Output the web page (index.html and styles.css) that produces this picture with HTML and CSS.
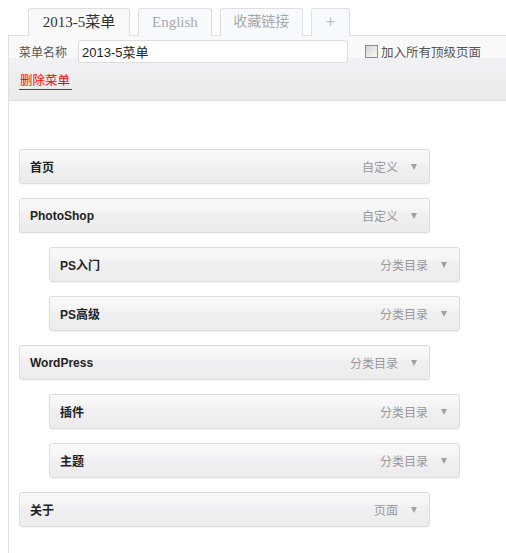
FILE: index.html
```html
<!DOCTYPE html>
<html lang="zh-CN">
<head>
<meta charset="utf-8">
<title>菜单</title>
<link rel="stylesheet" href="styles.css">
</head>
<body>
<div class="tabs">
  <div class="tab active">2013-5菜单</div>
  <div class="tab">English</div>
  <div class="tab cn">收藏链接</div>
  <div class="tab plus">+</div>
</div>
<div class="panel">
  <div class="header">
    <div class="name-row">
      <label class="name-label">菜单名称</label>
      <input class="name-input" type="text" value="2013-5菜单">
      <label class="auto"><span class="cb"></span>加入所有顶级页面</label>
    </div>
    <div class="del-row"><a class="del">删除菜单</a></div>
  </div>
  <ul class="menu">
    <li class="item"><span class="title">首页</span><span class="type">自定义</span><span class="arrow"></span></li>
    <li class="item"><span class="title">PhotoShop</span><span class="type">自定义</span><span class="arrow"></span></li>
    <li class="item sub"><span class="title">PS入门</span><span class="type">分类目录</span><span class="arrow"></span></li>
    <li class="item sub"><span class="title">PS高级</span><span class="type">分类目录</span><span class="arrow"></span></li>
    <li class="item"><span class="title">WordPress</span><span class="type">分类目录</span><span class="arrow"></span></li>
    <li class="item sub"><span class="title">插件</span><span class="type">分类目录</span><span class="arrow"></span></li>
    <li class="item sub"><span class="title">主题</span><span class="type">分类目录</span><span class="arrow"></span></li>
    <li class="item"><span class="title">关于</span><span class="type">页面</span><span class="arrow"></span></li>
  </ul>
</div>
</body>
</html>
```
FILE: styles.css
```css
html, body {
  margin: 0;
  padding: 0;
  background: #fff;
}
body {
  padding: 8px 0 0 8px;
  font-family: "Liberation Sans", "Noto Sans CJK SC", sans-serif;
  font-size: 12px;
  color: #333;
  overflow: hidden;
}
.tabs {
  display: flex;
  gap: 8px;
  margin-left: 20px;
  position: relative;
  z-index: 1;
  margin-bottom: -1px;
}
.tab {
  box-sizing: border-box;
  height: 28px;
  border: 1px solid #dfdfdf;
  border-bottom: none;
  border-radius: 3px 3px 0 0;
  background: #f8fbfe;
  font-family: "Liberation Serif", "Noto Sans CJK SC", serif;
  font-size: 15px;
  line-height: 26px;
  color: #a9a9a9;
  text-align: center;
  padding: 0 13px;
}
.tab.active {
  background: #f9f9f9;
  color: #333;
  width: 102px;
  padding: 0;
}
.tab.cn {
  font-size: 14px;
  width: 83px;
  padding: 0;
}
.tab.plus {
  width: 39px;
  padding: 0;
  font-family: "Liberation Sans", sans-serif;
  font-size: 16px;
  color: #bbb;
}
.panel {
  border-left: 1px solid #dfdfdf;
  border-top: 1px solid #dfdfdf;
  min-height: 520px;
}
.header {
  background: linear-gradient(to bottom, #f9f9f9 0, #f9f9f9 22px, #f1f1f4 22px, #f1f1f4 36px, #eeeeee 36px, #ececec 64px);
  border-bottom: 1px solid #dfdfdf;
  height: 64px;
}
.name-row {
  display: flex;
  align-items: center;
  height: 23px;
  padding: 4px 0 0 10px;
}
.name-label {
  color: #555;
  font-size: 12px;
  width: 48px;
  margin-right: 11px;
}
.name-input {
  box-sizing: border-box;
  width: 270px;
  height: 23px;
  margin: 0;
  border: 1px solid #dcdcdc;
  border-radius: 3px;
  background: #fff;
  padding: 0 3px;
  font-family: "Liberation Sans", "Noto Sans CJK SC", sans-serif;
  font-size: 13px;
  color: #222;
  outline: none;
}
.auto {
  display: flex;
  align-items: center;
  margin-left: 17px;
  font-size: 12.5px;
  color: #555;
}
.cb {
  box-sizing: border-box;
  width: 13px;
  height: 13px;
  border: 1px solid #8c8c8c;
  background: linear-gradient(135deg, #d4d4d4, #fbfbfb);
  margin-right: 3px;
}
.del-row {
  padding: 11px 0 0 10px;
}
.del {
  display: inline-block;
  color: #f00;
  font-size: 12.5px;
  line-height: 15px;
  padding: 0 2px 0 1px;
  border-bottom: 1.5px solid #f00;
  cursor: pointer;
}
.menu {
  list-style: none;
  margin: 0;
  padding: 48px 0 20px 10px;
}
.item {
  box-sizing: border-box;
  width: 411px;
  height: 35px;
  margin-bottom: 14px;
  display: flex;
  align-items: center;
  border: 1px solid #dcdcdc;
  border-radius: 3px;
  background: linear-gradient(to bottom, #f9f9f9 0, #f6f6f6 30%, #f0f0f2 45%, #ececec 100%);
  box-shadow: 0 1px 0 #f4f4f4;
  padding: 0 12px 0 10px;
}
.item.sub {
  margin-left: 30px;
}
.title {
  flex: 1;
  font-weight: bold;
  font-size: 12px;
  color: #222;
}
.type {
  font-size: 12px;
  color: #999;
}
.arrow {
  width: 0;
  height: 0;
  margin-left: 13px;
  border-left: 3px solid transparent;
  border-right: 3px solid transparent;
  border-top: 6px solid #a0a0a0;
}
```
